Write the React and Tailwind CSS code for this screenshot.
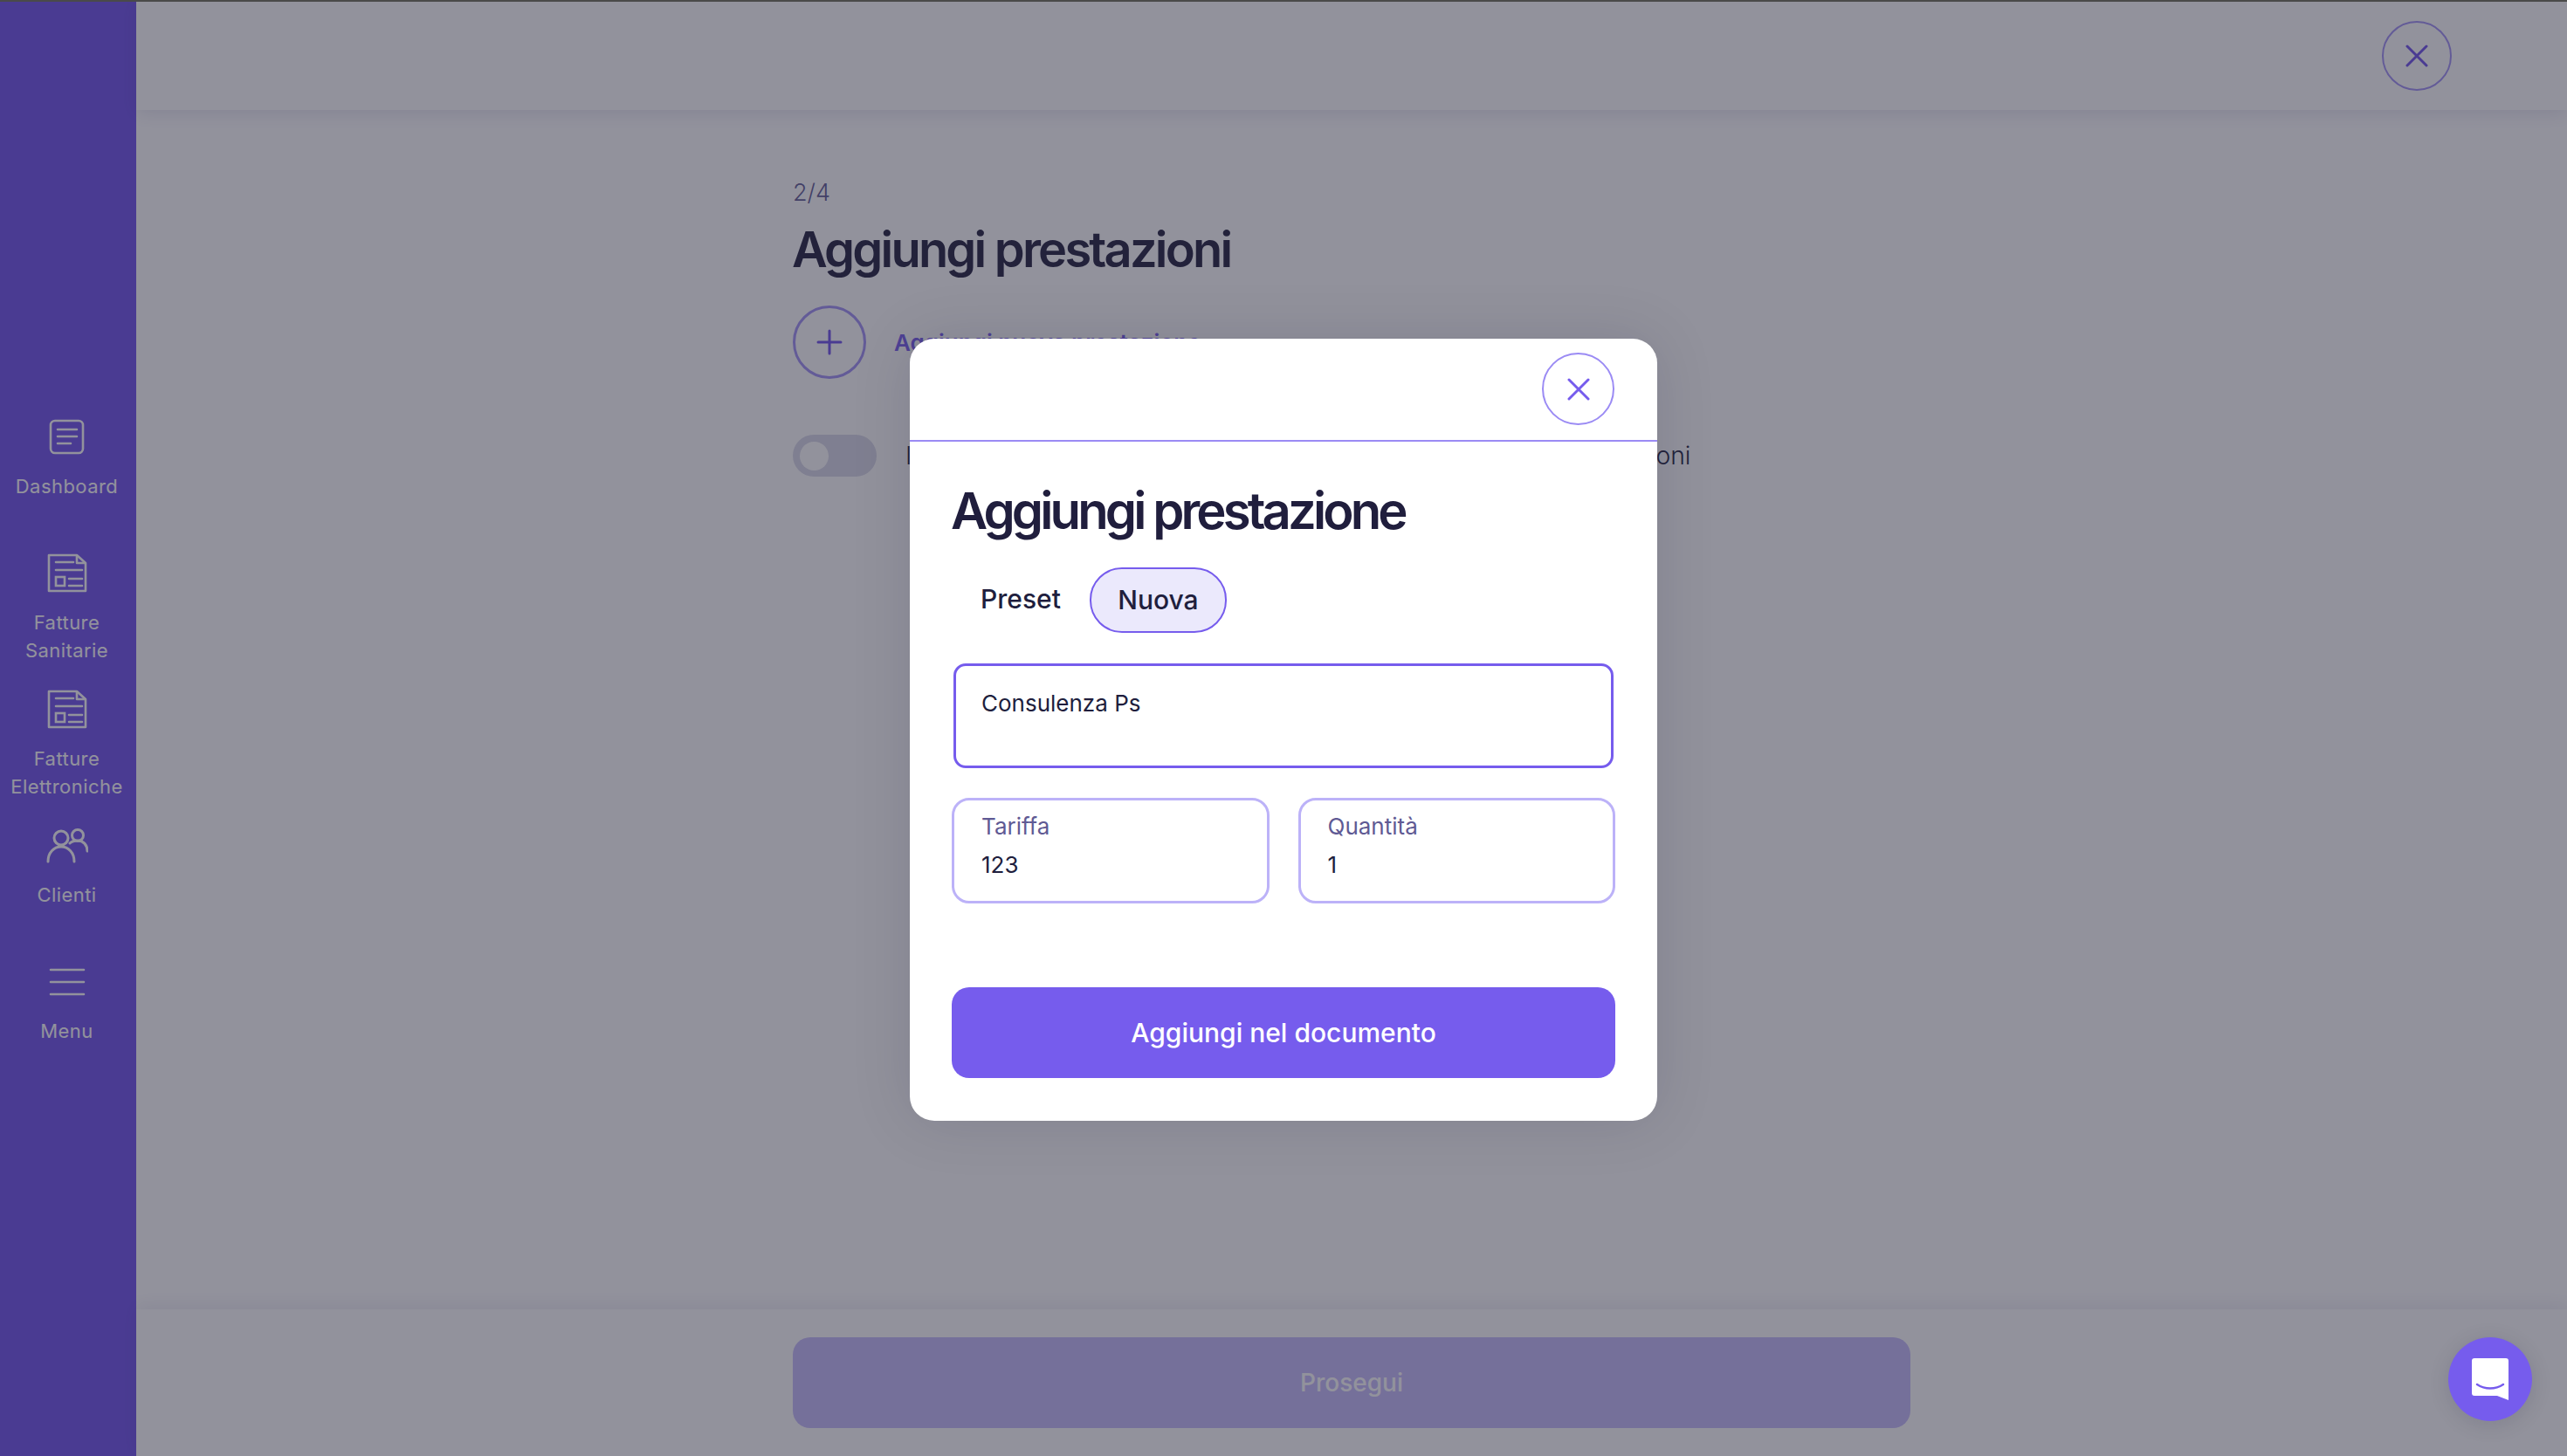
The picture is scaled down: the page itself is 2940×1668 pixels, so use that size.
import React from "react";

const bodyFont = "font-['Inter','Noto_Sans',sans-serif]";

const DashboardIcon = () => (
  <svg width="48" height="48" viewBox="0 0 48 48" fill="none" stroke="currentColor" strokeWidth="2.6" strokeLinecap="round">
    <rect x="5" y="5" width="37" height="37" rx="5" />
    <path d="M13 15h22M13 23h22M13 31h15" />
  </svg>
);

const InvoiceIcon = () => (
  <svg width="48" height="48" viewBox="0 0 48 48" fill="none" stroke="currentColor" strokeWidth="2.6">
    <path d="M3 3h32l10 9v32H3z" strokeLinejoin="round" />
    <path d="M35 3v9h10" strokeLinejoin="round" />
    <path d="M11 11h20M11 20h30M26 30h15M26 38h15" strokeLinecap="round" />
    <rect x="11" y="28" width="10" height="10" />
  </svg>
);

const ClientsIcon = () => (
  <svg width="48" height="48" viewBox="0 0 48 48" fill="none" stroke="currentColor" strokeWidth="3" strokeLinecap="round">
    <circle cx="17" cy="15" r="8" />
    <circle cx="36" cy="12" r="6.5" />
    <path d="M2 42c0-10 6.500-17 15-17s15 7 15 17" />
    <path d="M27 21c2-2 5.500-3 9-3 6.500 0 11 5 11 12" />
  </svg>
);

const MenuIcon = () => (
  <svg width="48" height="48" viewBox="0 0 48 48" fill="none" stroke="currentColor" strokeWidth="2.6" strokeLinecap="round">
    <path d="M5 10h38M5 24h38M5 38h38" />
  </svg>
);

const CloseIcon = () => (
  <svg width="26" height="26" viewBox="0 0 26 26" fill="none" stroke="currentColor" strokeWidth="3" strokeLinecap="round">
    <path d="M2 2l22 22M24 2L2 24" />
  </svg>
);

const navItems = [
  { icon: <DashboardIcon />, label: ["Dashboard"] },
  { icon: <InvoiceIcon />, label: ["Fatture", "Sanitarie"] },
  { icon: <InvoiceIcon />, label: ["Fatture", "Elettroniche"] },
  { icon: <ClientsIcon />, label: ["Clienti"] },
  { icon: <MenuIcon />, label: ["Menu"] },
];

const Field = ({ label, value }) => (
  <div className="flex-1 h-[121px] border-[3px] border-[#bcb2f8] rounded-[20px] pl-[31px] pt-[14px]">
    <div className="text-[26px] leading-[32px] text-[#5f5a94]">{label}</div>
    <div className="text-[26px] leading-[32px] mt-[12px] text-[#201e3d]">{value}</div>
  </div>
);

export default function App() {
  return (
    <div className={`relative w-full h-[1668px] overflow-hidden flex bg-white ${bodyFont}`}>
      {/* Sidebar */}
      <aside className="w-[156px] shrink-0 pr-[3px] bg-[#6f51eb] text-white flex flex-col justify-center">
        {navItems.map((item, index) => (
          <div key={index} className="h-[156px] pt-[33px] flex flex-col items-center">
            <div className="h-[48px] shrink-0">{item.icon}</div>
            <div className="mt-[16px] shrink-0 text-[22px] leading-[32px] text-center tracking-[0.02em]">
              {item.label.map((line) => (
                <div key={line}>{line}</div>
              ))}
            </div>
          </div>
        ))}
      </aside>

      {/* Page behind the modal */}
      <div className="flex-1 flex flex-col min-w-0">
        <header className="h-[126px] shrink-0 bg-white flex items-center justify-end pr-[132px] pt-[2px] shadow-[0_4px_20px_rgba(60,50,130,0.14)]">
          <button className="w-[80px] h-[80px] rounded-full border-2 border-[#a090f5] text-[#6f51eb] flex items-center justify-center">
            <CloseIcon />
          </button>
        </header>

        <main className="flex-1 w-[1280px] mx-auto pt-[79px]">
          <div className="text-[27px] leading-[32px] font-light text-[#5f5a94]">2/4</div>
          <h1 className="mt-[19px] -ml-[1px] text-[56px] leading-[60px] font-semibold tracking-[-0.05em] text-[#201e3d]">
            Aggiungi prestazioni
          </h1>
          <div className="mt-[34px] flex items-center gap-[32px]">
            <button className="w-[84px] h-[84px] rounded-full border-[3px] border-[#a090f5] text-[#6f51eb] flex items-center justify-center">
              <svg width="30" height="30" viewBox="0 0 30 30" fill="none" stroke="currentColor" strokeWidth="3" strokeLinecap="round">
                <path d="M15 2v26M2 15h26" />
              </svg>
            </button>
            <span className="text-[26px] font-semibold text-[#765ced]">Aggiungi nuova prestazione</span>
          </div>
          <div className="mt-[64px] flex items-center gap-[33px]">
            <div className="w-[96px] h-[48px] rounded-full bg-[#d9d9e8] flex items-center pl-[8px]">
              <div className="w-[33px] h-[33px] rounded-full bg-white" />
            </div>
            <span className="text-[28.3px] font-light whitespace-nowrap text-[#201e3d]">Inserisci la marca da bollo e la stessa tariffa in tutte le tue prestazioni</span>
          </div>
        </main>

        <footer className="h-[168px] shrink-0 bg-white flex justify-center pt-[32px] shadow-[0_-4px_20px_rgba(60,50,130,0.1)]">
          <button className="w-[1280px] h-[104px] rounded-[20px] bg-[#c5bbfb] text-[28px] font-medium text-white">
            Prosegui
          </button>
        </footer>
      </div>

      {/* Overlay with modal */}
      <div className="absolute inset-0 bg-[#252539]/50 flex items-center justify-center">
        <div className="w-[856px] mt-[4px] bg-white rounded-[28px] shadow-[0_0_70px_rgba(20,20,50,0.12)] text-[#201e3d]">
          <div className="h-[118px] pr-[49px] pt-[16px] border-b-2 border-[#9b8bf4] flex justify-end items-start">
            <button className="w-[83px] h-[83px] rounded-full border-2 border-[#9b8bf4] text-[#765ced] flex items-center justify-center">
              <CloseIcon />
            </button>
          </div>
          <div className="px-[48px] pb-[49px] pt-[47px]">
            <h2 className="-ml-[1px] text-[58px] leading-[64px] font-semibold tracking-[-0.067em]">Aggiungi prestazione</h2>
            <div className="mt-[33px] flex items-center">
              <div className="px-[33px] text-[30px] font-medium -translate-y-[1px]">Preset</div>
              <div className="w-[157px] h-[75px] rounded-[37px] bg-[#ebe9fc] border-2 border-[#765ced] text-[30px] font-medium flex items-center justify-center">
                Nuova
              </div>
            </div>
            <div className="mt-[35px] mx-[2px] h-[120px] border-[3px] border-[#765ced] rounded-[14px] pl-[29px] pt-[27px] text-[26px] leading-[32px]">
              Consulenza Ps
            </div>
            <div className="mt-[34px] flex gap-[33px]">
              <Field label="Tariffa" value="123" />
              <Field label="Quantità" value="1" />
            </div>
            <button className="mt-[96px] w-full h-[104px] rounded-[20px] bg-[#765ced] text-white text-[30px] font-medium">
              Aggiungi nel documento
            </button>
          </div>
        </div>
      </div>

      {/* Chat button */}
      <button className="absolute right-[40px] bottom-[40px] w-[96px] h-[96px] rounded-full bg-[#765ced] flex items-center justify-center shadow-[0_4px_24px_rgba(20,20,50,0.12)]">
        <svg width="42" height="48" viewBox="0 0 42 48" fill="none">
          <path d="M3 0h36a3 3 0 0 1 3 3v45l-13-5H3a3 3 0 0 1-3-3V3a3 3 0 0 1 3-3z" fill="#fff" />
          <path d="M6 30c9 6 21 6 30 0" stroke="#765ced" strokeWidth="2.5" strokeLinecap="round" />
        </svg>
      </button>

      {/* Top edge */}
      <div className="absolute top-0 inset-x-0 h-[2px] bg-[#4a4a4a]" />
    </div>
  );
}
